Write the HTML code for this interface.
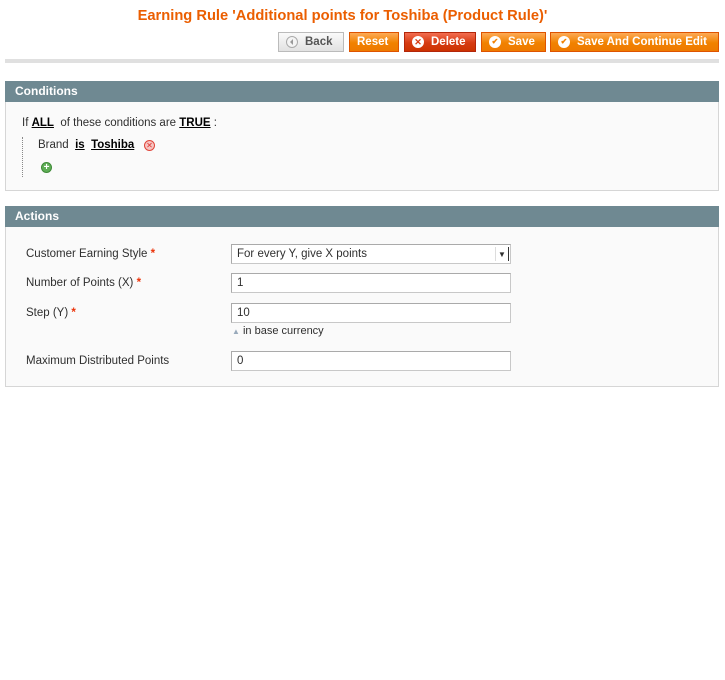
<!DOCTYPE html><html><head><style>
body{margin:0;background:#fff;font-family:"Liberation Sans",Arial,sans-serif;font-size:12px;color:#2f2f2f;}
.abs{position:absolute}
h3{position:absolute;left:0;width:685px;text-align:center;top:8px;margin:0;font-size:14.7px;color:#eb5e00;font-weight:bold;}
.btn{position:absolute;top:32px;height:20px;box-sizing:border-box;border:1px solid #de5400;background:linear-gradient(#fdaa56,#f18200 55%,#ee7a00);color:#fff;font-weight:bold;font-size:11.5px;padding-left:7px;display:flex;align-items:center;}
.btn.del{border-color:#b3260a;background:linear-gradient(#f26d4f,#d63b12 55%,#cc3300);}
.btn.back{border-color:#bbb;background:linear-gradient(#fafafa,#e2e2e2);color:#555;}
.ic{display:inline-block;width:12px;height:12px;border-radius:50%;background:#fff;margin-right:7px;position:relative;flex:none;text-align:center;line-height:12px}
.hd{position:absolute;left:5px;width:714px;height:21px;background:#6f8992;color:#fff;font-weight:bold;font-size:12px;line-height:21px;padding-left:10px;box-sizing:border-box;}
.box{position:absolute;left:5px;width:714px;background:#fafafa;border:1px solid #d6d6d6;border-top:none;box-sizing:border-box;}
u{font-weight:bold;color:#000}
.lbl{position:absolute;left:26px;font-size:11.5px;color:#2f2f2f}
.lbl b{color:#eb340a}
.inp{position:absolute;left:231px;width:280px;height:20px;box-sizing:border-box;border:1px solid #aaa;background:#fff;font-size:11.5px;line-height:18px;padding-left:5px;border-color:#aaa #c8c8c8 #c8c8c8 #aaa}
</style></head><body>
<h3>Earning Rule 'Additional points for Toshiba (Product Rule)'</h3>
<div class="btn back" style="left:278px;width:66px;"><span class="ic" style="border:1px solid #aaa;width:10px;height:10px;background:#f4f4f4"><span class="abs" style="left:3px;top:2px;border:3px solid transparent;border-right:3px solid #999;border-left:none"></span></span>Back</div>
<div class="btn" style="left:349px;width:50px;">Reset</div>
<div class="btn del" style="left:404px;width:72px;"><span class="ic" style="color:#d63b12;font-size:9px;font-weight:bold">✕</span>Delete</div>
<div class="btn" style="left:481px;width:65px;"><span class="ic" style="color:#f18200;font-size:8px">✔</span>Save</div>
<div class="btn" style="left:550px;width:169px;"><span class="ic" style="color:#f18200;font-size:8px">✔</span>Save And Continue Edit</div>
<div class="abs" style="left:5px;top:59px;width:714px;height:4px;background:#e0e0e0"></div>

<div class="hd" style="top:81px">Conditions</div>
<div class="box" style="top:102px;height:89px">
<div class="abs" style="left:16px;top:15px;font-size:11.5px">If <u>ALL</u>&nbsp; of these conditions are <u>TRUE</u> :</div>
<div class="abs" style="left:16px;top:35px;height:40px;border-left:1px dotted #888"></div>
<div class="abs" style="left:32px;top:37px;font-size:11.5px">Brand &nbsp;<u>is</u>&nbsp; <u>Toshiba</u></div>
<div class="abs" style="left:138px;top:38px;width:11px;height:11px;border-radius:50%;background:#f6c4c0;border:1px solid #e0453a;box-sizing:border-box;color:#d33;font-size:8px;line-height:9px;text-align:center">✕</div>
<div class="abs" style="left:35px;top:60px;width:11px;height:11px;border-radius:50%;background:#5fae56;border:1px solid #3e8a37;box-sizing:border-box;color:#fff;font-size:10px;line-height:9px;text-align:center;font-weight:bold">+</div>
</div>

<div class="hd" style="top:206px">Actions</div>
<div class="box" style="top:227px;height:160px"></div>
<div class="lbl" style="top:248px">Customer Earning Style <b>*</b></div>
<div class="inp" style="top:244px;">For every Y, give X points<span class="abs" style="right:1px;top:2px;width:12px;height:14px;border-left:1px solid #ddd;border-right:1px solid #333;font-size:8px;line-height:16px;text-align:center">▼</span></div>
<div class="lbl" style="top:277px">Number of Points (X) <b>*</b></div>
<div class="inp" style="top:273px;">1</div>
<div class="lbl" style="top:307px">Step (Y) <b>*</b></div>
<div class="inp" style="top:303px;">10</div>
<div class="abs" style="left:232px;top:325px;font-size:11px"><span style="color:#9ab;font-size:8px">▲</span> in base currency</div>
<div class="lbl" style="top:355px">Maximum Distributed Points</div>
<div class="inp" style="top:351px;">0</div>
</body></html>
